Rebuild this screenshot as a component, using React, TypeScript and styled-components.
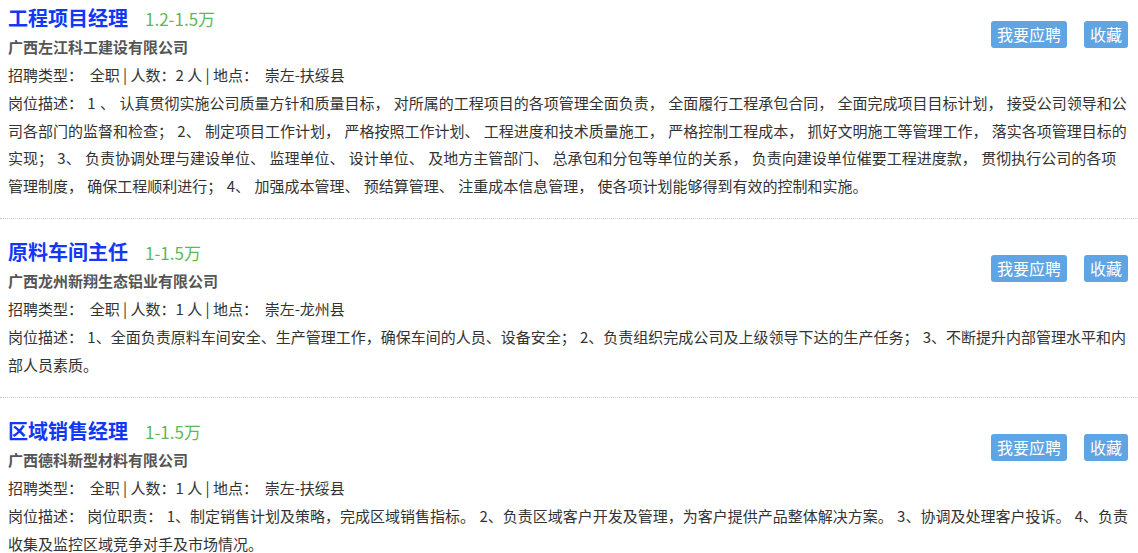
import React from 'react'
import styled, { createGlobalStyle } from 'styled-components'

const GlobalStyle = createGlobalStyle`
  body {
    margin: 0;
    background: #fff;
    font-family: "Noto Sans CJK SC", "Noto Sans", sans-serif;
    color: #333;
  }
`

const JobList = styled.div`
  width: 1138px;
`

const JobItem = styled.div`
  padding: 18px 8px 19px;
  border-bottom: 1px dotted #c8c8c8;

  &:first-child {
    padding-top: 3px;
  }
`

const Header = styled.div`
  display: flex;
  justify-content: space-between;
  align-items: flex-start;
`

const Title = styled.div`
  display: flex;
  align-items: baseline;
  height: 30px;
  line-height: 30px;
`

const JobName = styled.span`
  font-size: 20px;
  font-weight: bold;
  color: #1238f5;
`

const Salary = styled.span`
  margin-left: 17px;
  font-size: 17px;
  color: #5cb85c;
`

const Company = styled.div`
  font-size: 15px;
  font-weight: bold;
  color: #555;
  line-height: 28px;
`

const Info = styled.div`
  font-size: 15px;
  line-height: 28px;
  white-space: pre;
`

const Desc = styled.div`
  font-size: 15px;
  line-height: 27.5px;
  word-spacing: 1px;
`

const Actions = styled.div`
  display: flex;
  gap: 17px;
  margin: 18px 2px 0 0;
`

const Button = styled.button`
  height: 27px;
  padding: 0 6px;
  border: none;
  border-radius: 3px;
  background: #5fa5e3;
  color: #fff;
  font-family: inherit;
  font-size: 16px;
  line-height: 27px;
  cursor: pointer;
`

const jobs = [
  {
    name: '工程项目经理',
    salary: '1.2-1.5万',
    company: '广西左江科工建设有限公司',
    count: 2,
    place: '崇左-扶绥县',
    desc:
      '1 、 认真贯彻实施公司质量方针和质量目标， 对所属的工程项目的各项管理全面负责， 全面履行工程承包合同， 全面完成项目目标计划， 接受公司领导和公司各部门的监督和检查； 2、 制定项目工作计划， 严格按照工作计划、 工程进度和技术质量施工， 严格控制工程成本， 抓好文明施工等管理工作， 落实各项管理目标的实现； 3、 负责协调处理与建设单位、 监理单位、 设计单位、 及地方主管部门、 总承包和分包等单位的关系， 负责向建设单位催要工程进度款， 贯彻执行公司的各项管理制度， 确保工程顺利进行； 4、 加强成本管理、 预结算管理、 注重成本信息管理， 使各项计划能够得到有效的控制和实施。',
  },
  {
    name: '原料车间主任',
    salary: '1-1.5万',
    company: '广西龙州新翔生态铝业有限公司',
    count: 1,
    place: '崇左-龙州县',
    desc:
      '1、全面负责原料车间安全、生产管理工作，确保车间的人员、设备安全； 2、负责组织完成公司及上级领导下达的生产任务； 3、不断提升内部管理水平和内部人员素质。',
  },
  {
    name: '区域销售经理',
    salary: '1-1.5万',
    company: '广西德科新型材料有限公司',
    count: 1,
    place: '崇左-扶绥县',
    desc:
      '岗位职责： 1、制定销售计划及策略，完成区域销售指标。 2、负责区域客户开发及管理，为客户提供产品整体解决方案。 3、协调及处理客户投诉。 4、负责收集及监控区域竞争对手及市场情况。',
  },
]

export default function App() {
  return (
    <>
      <GlobalStyle />
      <JobList>
        {jobs.map((job) => (
          <JobItem key={job.name}>
            <Header>
              <div>
                <Title>
                  <JobName>{job.name}</JobName>
                  <Salary>{job.salary}</Salary>
                </Title>
                <Company>{job.company}</Company>
                <Info>
                  {`招聘类型：  全职 | 人数：${job.count} 人 | 地点：  ${job.place}`}
                </Info>
              </div>
              <Actions>
                <Button>我要应聘</Button>
                <Button>收藏</Button>
              </Actions>
            </Header>
            <Desc>{`岗位描述： ${job.desc}`}</Desc>
          </JobItem>
        ))}
      </JobList>
    </>
  )
}
